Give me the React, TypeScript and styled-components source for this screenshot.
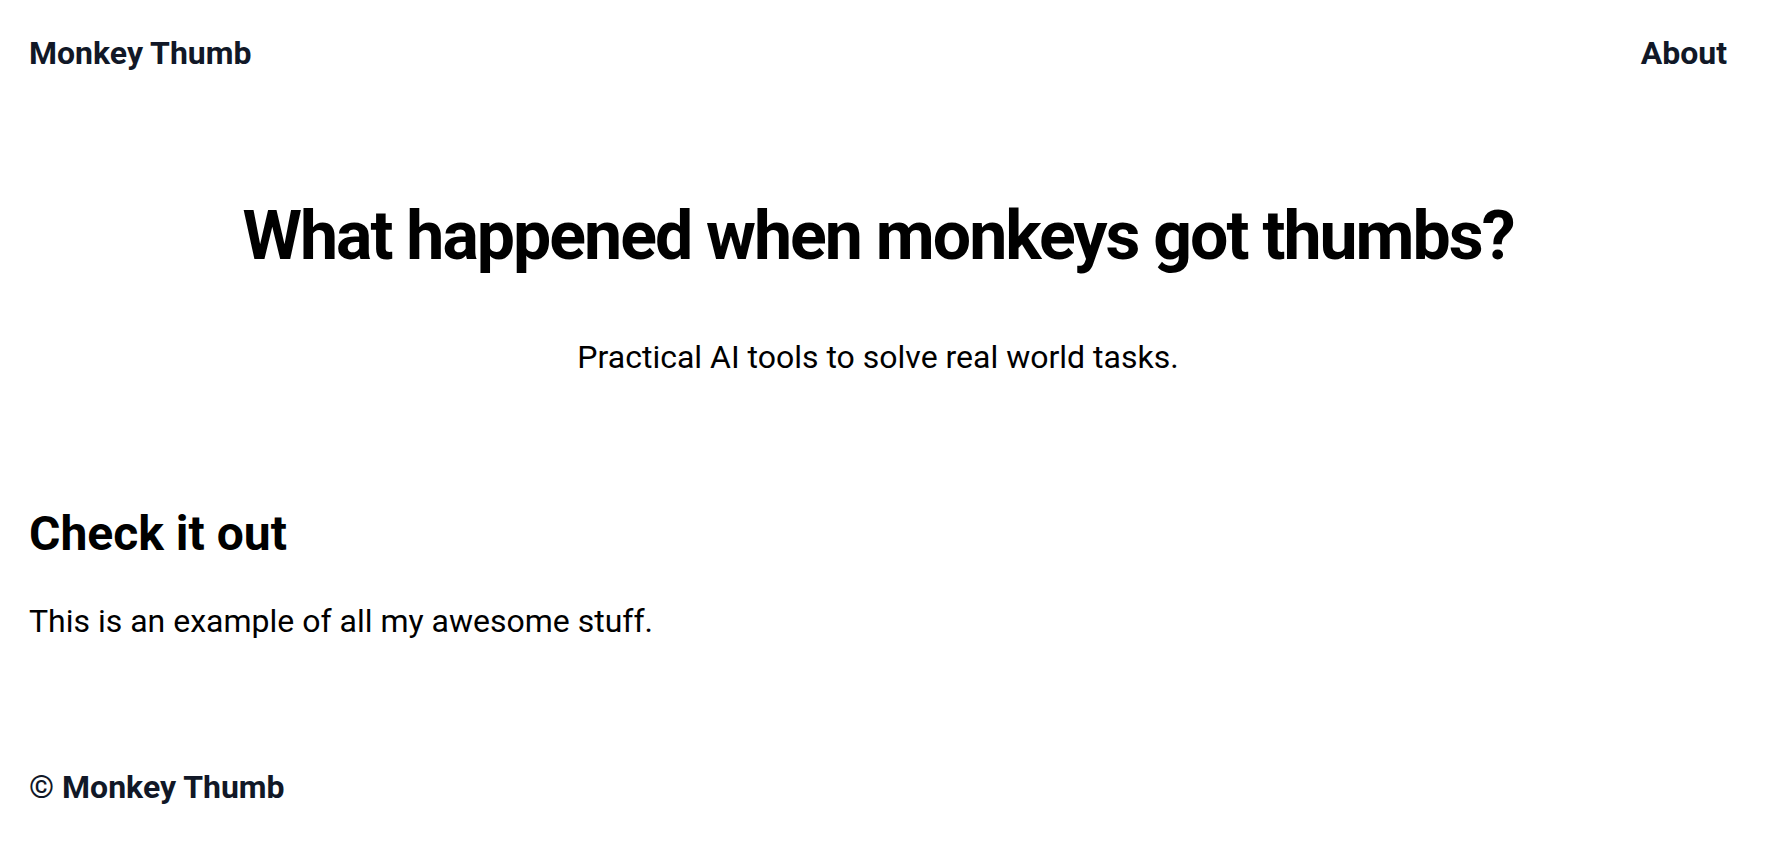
import React from "react";
import styled, { createGlobalStyle } from "styled-components";

const GlobalStyle = createGlobalStyle`
  html, body {
    margin: 0;
    padding: 0;
    background: #ffffff;
  }
  body {
    font-family: Roboto, "Liberation Sans", Arial, sans-serif;
    -webkit-font-smoothing: antialiased;
  }
`;

const Page = styled.div`
  display: flex;
  flex-direction: column;
  padding: 34px 65px 40px 29px;
`;

const Header = styled.header`
  display: flex;
  justify-content: space-between;
  align-items: center;
`;

const NavText = styled.a`
  font-size: 32px;
  line-height: 1.2;
  font-weight: 700;
  color: #111827;
  text-decoration: none;
`;

const Hero = styled.section`
  display: flex;
  flex-direction: column;
  align-items: center;
  text-align: center;
  padding-top: 124px;
`;

const Title = styled.h1`
  margin: 0;
  font-size: 68px;
  line-height: 1.2;
  font-weight: 700;
  letter-spacing: -2px;
  color: #000;
`;

const Subtitle = styled.p`
  margin: 60px 0 0;
  font-size: 32px;
  line-height: 1.2;
  font-weight: 400;
  color: #000;
`;

const Section = styled.section`
  padding-top: 129px;
`;

const SectionTitle = styled.h2`
  margin: 0;
  font-size: 48px;
  line-height: 1.2;
  font-weight: 700;
  color: #000;
`;

const Body = styled.p`
  margin: 39px 0 0;
  font-size: 32px;
  line-height: 1.2;
  color: #000;
`;

const Footer = styled.footer`
  padding-top: 128px;
  font-size: 32px;
  line-height: 1.2;
  font-weight: 700;
  color: #111827;
`;

export default function App() {
  return (
    <>
      <GlobalStyle />
      <Page>
        <Header>
          <NavText href="#">Monkey Thumb</NavText>
          <NavText href="#">About</NavText>
        </Header>

        <Hero>
          <Title>What happened when monkeys got thumbs?</Title>
          <Subtitle>Practical AI tools to solve real world tasks.</Subtitle>
        </Hero>

        <Section>
          <SectionTitle>Check it out</SectionTitle>
          <Body>This is an example of all my awesome stuff.</Body>
        </Section>

        <Footer>© Monkey Thumb</Footer>
      </Page>
    </>
  );
}
